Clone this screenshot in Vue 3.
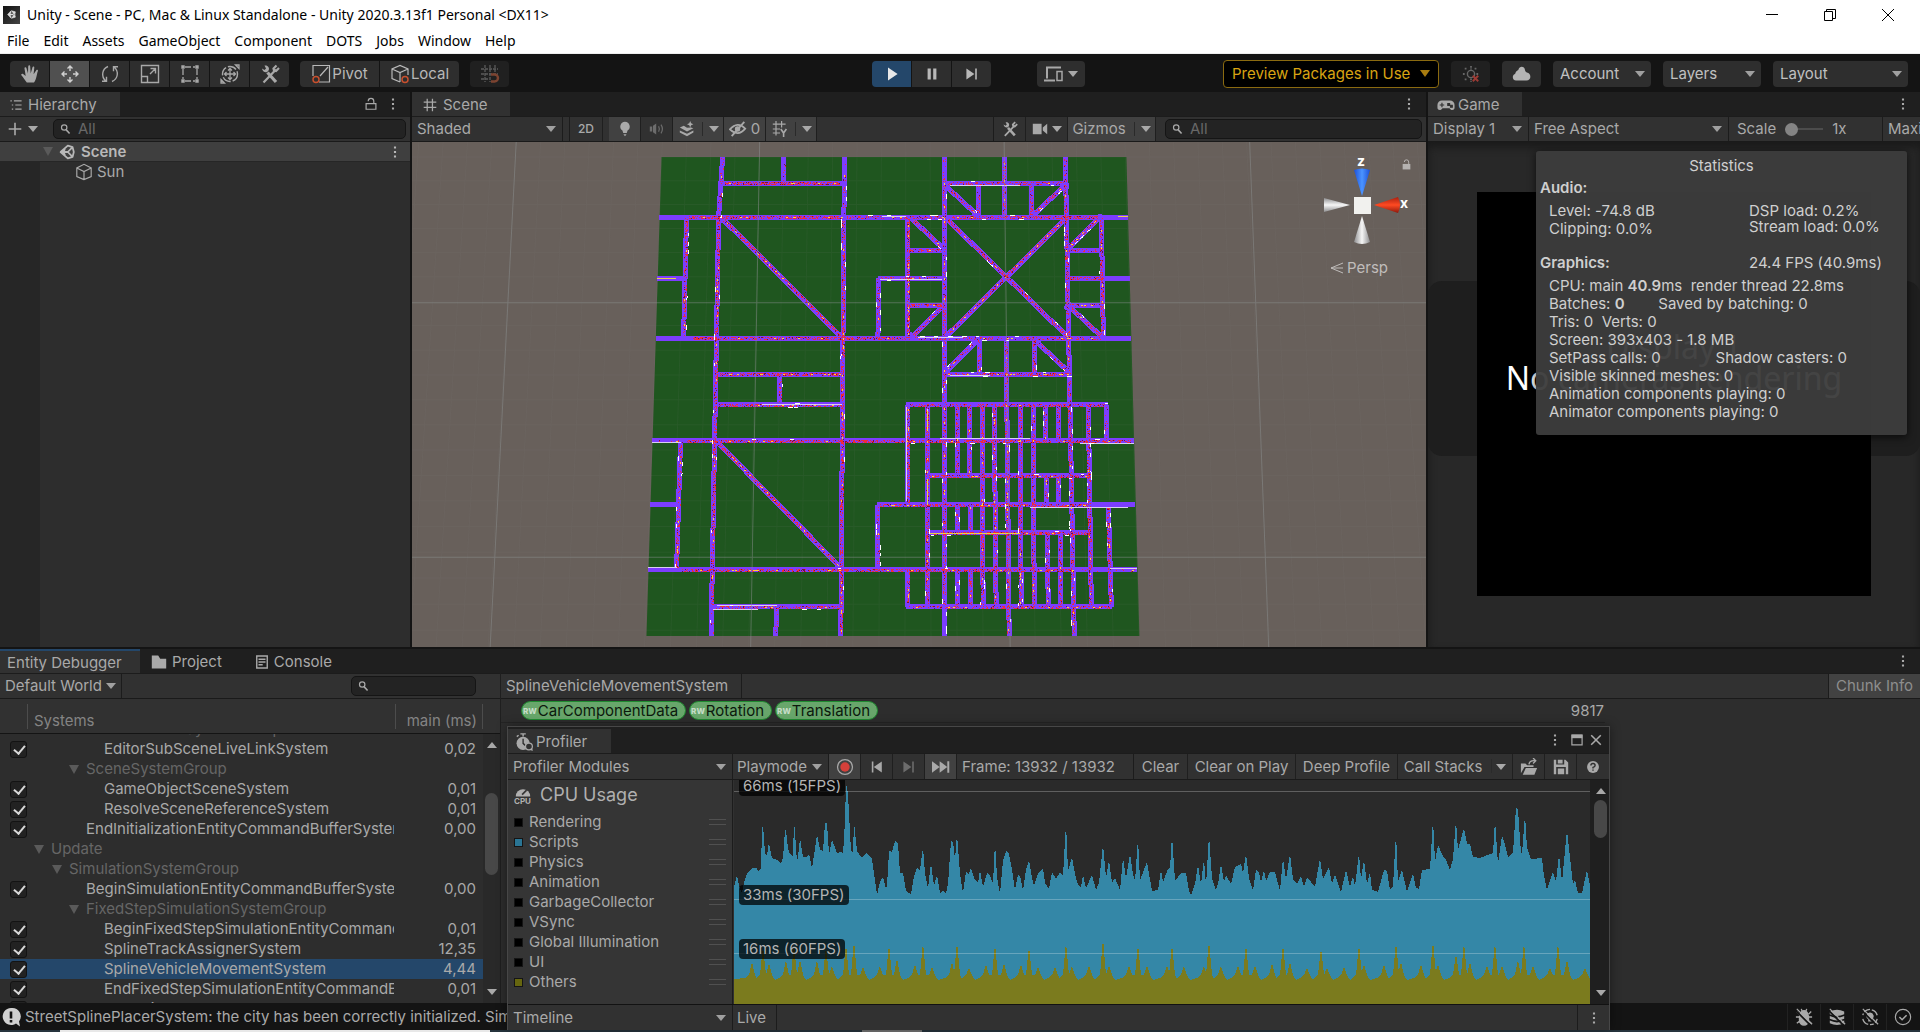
<script setup>
const icons = {
  logo: '<path d="M3 10 L9 3.5 L9 7 L7 9.2 H13 V10.8 H7 L9 13 V16.5 Z M9.5 3 L17 5.2 L15.5 12 M9.5 17 L17 14.8 L15.5 8" fill="currentColor" stroke="currentColor" stroke-width="1.2" fill-rule="evenodd"/>',
  unity: '<path d="M2 10 L11 2 L17 4 L18.500 10 L17 16 L11 18 Z M2 10 H11 L17 4 M11 10 L17 16 M7.500 6 L5.500 10 L7.500 14" fill="none" stroke="currentColor" stroke-width="2.200" stroke-linejoin="round"/>',
  hand: '<path d="M6.800 18.500 C4.500 16 3.500 13.600 1.400 11.300 C.7 10.300 2.100 9.300 3.100 10.100 L5.700 12.100 L4.500 4.500 C4.300 3.200 6 2.800 6.400 4 L8 9.600 L8.200 2.400 C8.300 1 10.100 1 10.200 2.400 L10.700 9.400 L12.500 3.200 C12.900 2 14.500 2.300 14.300 3.600 L13.600 10.200 L16.300 6.200 C17 5.200 18.400 6 17.900 7.100 C16.600 10.500 16.700 15.500 14 18.500 Z" fill="currentColor"/>',
  move: '<path d="M10 2v5M10 13v5M2 10h5M13 10h5M7.500 4.500L10 2l2.500 2.500M7.500 15.500L10 18l2.500-2.500M4.500 7.500L2 10l2.500 2.500M15.500 7.500L18 10l-2.500 2.500" fill="none" stroke="currentColor" stroke-width="1.400"/>',
  rotate: '<path d="M8 2.500C2 5 .8 12.500 5.800 17M2 17.200h4.500v-4.500M12 17.500C18 15 19.200 7.500 14.200 3M18 2.800h-4.500v4.500" fill="none" stroke="currentColor" stroke-width="1.400"/>',
  scale: '<path d="M1.500 1.500h17v17h-17zM1.500 12.500h6v6M10 10l5-5M10.500 4.500h5v5" fill="none" stroke="currentColor" stroke-width="1.400"/>',
  rect: '<path d="M5 3h10M5 17h10M3 5v10M17 5v10" fill="none" stroke="currentColor" stroke-width="1.300" stroke-dasharray="6 2"/><path d="M1.300 1.300h3.400v3.400H1.300zM15.300 1.300h3.400v3.400h-3.400zM1.300 15.300h3.400v3.400H1.300zM15.300 15.300h3.400v3.400H15.300z" fill="currentColor"/>',
  trans: '<circle cx="10" cy="10" r="7.500" fill="none" stroke="currentColor" stroke-width="1.400" stroke-dasharray="9 2"/><path d="M10 4.500v11M4.500 10h11M8 6.500l2-2 2 2M8 13.500l2 2 2-2M6.500 8l-2 2 2 2M13.500 8l2 2-2 2M1 15.500l3.500 3.500H1zM19 4.500L15.500 1H19z" fill="none" stroke="currentColor" stroke-width="1.300"/>',
  tools: '<path d="M3.500 18.500L16 5.500M16.500 1.500l-3 3 .5 2 2 .5 3-3" fill="none" stroke="currentColor" stroke-width="2.200"/><path d="M7.500 8.500l8.500 9.500" stroke="currentColor" stroke-width="3.200"/><path d="M2 4.500l2.500 1.500 1.500-1.500-1.500-3C8 1 10 4 8.500 6.500 7 9.500 2.500 8.500 2 4.500z" fill="currentColor"/>',
  pivot: '<path d="M8 18h10.500V1.500H2V12M9 12l8-9" fill="none" stroke="currentColor" stroke-width="1.200"/><circle cx="5" cy="15.500" r="3" fill="none" stroke="#c8502e" stroke-width="1.500"/>',
  local: '<path d="M10 18l-8-3.500V5L10 1.500 18 5v6M2 5l8 3.500L18 5M10 8.500V18" fill="none" stroke="currentColor" stroke-width="1.200"/><circle cx="15" cy="15.500" r="3" fill="none" stroke="#c8502e" stroke-width="1.500"/>',
  cube: '<path d="M10 18.500l-8-3.500V5.500L10 1.500l8 4V15zM2 5.500L10 9.500l8-4M10 9.500v9" fill="none" stroke="currentColor" stroke-width="1.300"/>',
  snap: '<path d="M1 5h17M1 10h17M1 15h8M5 1v17M10 1v17M15 1v8" fill="none" stroke="#5b5b5b" stroke-width="1.300" stroke-dasharray="3 1"/><path d="M11 10.500h3.500a3.500 3.500 0 010 7H11" fill="none" stroke="#7c4330" stroke-width="2.400"/>',
  play: '<path d="M5 2l12 8-12 8z" fill="#e8e8e8"/>',
  pause: '<path d="M4.500 3h4v14h-4zM11.500 3h4v14h-4z" fill="currentColor"/>',
  step: '<path d="M3 3l10 7-10 7zM14 3h2v14h-2z" fill="currentColor"/>',
  device: '<path d="M4 14.500V3.500h14M1 16.500h11" fill="none" stroke="currentColor" stroke-width="2"/><path d="M14 7.500h5v9h-5z" fill="none" stroke="currentColor" stroke-width="1.500"/>',
  bug: '<circle cx="10" cy="10" r="4" fill="none" stroke="#666" stroke-width="1.600"/><path d="M10 1v4M10 15v4M3 4h3M14 4h3M1 10h3M3 16h3M16 10h2" stroke="#666" stroke-width="2" stroke-dasharray="2 1"/><path d="M12 12l6 6M18 12l-6 6" stroke="#9c3a34" stroke-width="2.200"/>',
  cloud: '<path d="M4 16.500a3.500 3.500 0 01-.8-6.800C4 6.500 6 6.800 6.500 5.500 7.500 1.800 12.500 2 13 6c.1 1.200.8 2 1.800 2.600 5 1 4.600 7.900-.3 7.900z" fill="#b4b4b4"/>',
  hier: '<path d="M2 4h2M7 4h11M4 10h2M9 10h9M4 16h2M9 16h9" stroke="currentColor" stroke-width="1.700"/>',
  lock: '<path d="M3 9.500h14v8H3zM14 9.500V6a4 4 0 00-8 0" fill="none" stroke="currentColor" stroke-width="1.700"/>',
  lockFill: '<path d="M3 9h14v10H3z" fill="currentColor"/><path d="M14 9V5.500a4 4 0 00-8 0" fill="none" stroke="currentColor" stroke-width="1.800"/>',
  kebab: '<path d="M8.500 2h3v3h-3zM8.500 8.500h3v3h-3zM8.500 15h3v3h-3z" fill="currentColor"/>',
  plus: '<path d="M10 1v18M1 10h18" stroke="currentColor" stroke-width="2.300"/>',
  search: '<circle cx="7" cy="7.500" r="4.500" fill="none" stroke="currentColor" stroke-width="2"/><path d="M10 11l6 6.500" stroke="currentColor" stroke-width="2.600"/>',
  grid: '<path d="M6 1v18M13.500 1v18M1 6h18M1 13.500h18" stroke="currentColor" stroke-width="1.800"/>',
  bulb: '<path d="M10 1a6 6 0 00-3.200 11l1 3h4.400l1-3A6 6 0 0010 1zM8 16.500h4l-2 2.500z" fill="currentColor"/>',
  audio: '<path d="M1 7h3v6H1zM5 6l4-3v14l-4-3z" fill="currentColor"/><path d="M12 6.500q2 3.500 0 7M15 4.500q3.500 5.500 0 11" fill="none" stroke="currentColor" stroke-width="1.500"/>',
  layers: '<path d="M1 8l5-2 4 2.500L15 8l3 1-8 4zM1 12l9 4 8-4v2.500L10 19l-9-4.500zM14 0l1.200 2.800L18 4l-2.800 1.200L14 8l-1.200-2.800L10 4l2.800-1.200z" fill="currentColor"/>',
  eye: '<path d="M1 10.500Q9.500 1 18 9.500 10 19 1 10.500z" fill="none" stroke="currentColor" stroke-width="2"/><circle cx="9.500" cy="10" r="3" fill="currentColor"/><path d="M3 18L17 2" stroke="currentColor" stroke-width="2"/>',
  gridY: '<path d="M1 4h16M1 10h9M1 15h9M5 0v18M12 0v8" fill="none" stroke="currentColor" stroke-width="1.500"/><path d="M11 10l3.500 5L18 10M14.500 15v5" fill="none" stroke="currentColor" stroke-width="2"/>',
  camera: '<path d="M1 3.500h11v13H1zM13.500 8L19 3.500v13L13.500 12z" fill="currentColor"/>',
  pad: '<path d="M5.500 5h9a5 5 0 015 5v3c0 3.200-4.500 3.200-5.500.5H6C5 16.200.5 16.200.5 13v-3a5 5 0 015-5z" fill="currentColor"/><path d="M3 10h5M5.500 7.500v5M12 8.500h2v2h-2zM15 10.500h2v2h-2z" stroke="#313131" stroke-width="1.300" fill="#313131"/>',
  folder: '<path d="M1 2h8l2.500 4H19v12H1z" fill="currentColor"/>',
  console: '<path d="M2.500 1.500h15v17h-15zM5 6h10M5 10h10M5 14h6" fill="none" stroke="currentColor" stroke-width="2"/>',
  clock: '<circle cx="9" cy="11.500" r="7.300" fill="currentColor"/><path d="M6 1h6M9 1v3M2 4l2-1.500" stroke="currentColor" stroke-width="1.600"/><path d="M9 6.500v5l2.500 2.500" fill="none" stroke="#2d2d2d" stroke-width="1.500"/><circle cx="15.500" cy="15" r="3.800" fill="#313131" stroke="currentColor" stroke-width="1.400"/><path d="M17.500 17.500l2 2" stroke="currentColor" stroke-width="1.500"/>',
  cpu: '<path d="M2 11.500a8 8 0 1116 0z" fill="currentColor"/><path d="M9 9.500l5-5" stroke="#353535" stroke-width="1.800"/>',
  prev: '<path d="M16 3v14L6 10zM3.500 3h2v14h-2z" fill="currentColor"/>',
  last: '<path d="M0 3.500L8.500 10 0 16.500zM8.500 3.500L17 10l-8.500 6.500zM17 3.500h2.200v13H17z" fill="currentColor"/>',
  rec: '<circle cx="10" cy="10" r="8.300" fill="none" stroke="#a8a8a8" stroke-width="1.400"/><circle cx="10" cy="10" r="5.200" fill="#d4403a"/>',
  open: '<path d="M1 17V6h5l2 2h7v2H5zM3 18.500L6.500 11H19l-3 7.500z" fill="currentColor"/><path d="M10 7c.5-4 3-4.500 7-4M14.500 0l3 3-3 3" fill="none" stroke="currentColor" stroke-width="1.500"/>',
  save: '<path d="M1 1h3v6h10V1h1.500L19 4.500V19h-3v-9H4v9H1zM6 1h6v4.500H6zM6 12h8v7H6z" fill="currentColor" fill-rule="evenodd"/>',
  help: '<circle cx="10" cy="10" r="8.500" fill="currentColor"/><path d="M7 8q0-3 3-3t3 2.700q0 1.500-3 3v1.500" fill="none" stroke="#313131" stroke-width="2"/><path d="M9 13.500h2v2H9z" fill="#313131"/>',
  max: '<path d="M1.500 2h17v16h-17z" fill="none" stroke="currentColor" stroke-width="2"/><path d="M1 1h18v6H1z" fill="currentColor"/>',
  close: '<path d="M2 2l16 16M18 2L2 18" stroke="currentColor" stroke-width="2.600"/>',
  info: '<path d="M10 1a8.500 8.500 0 105 15.500l4 3-1-5A8.500 8.500 0 0010 1z" fill="#d0d0d0"/><path d="M10 4.500v7M10 13v2.500" stroke="#141414" stroke-width="2.600"/>',
  sBug: '<path d="M6 7a4 4 0 018 0l1 2v5a5 5 0 01-10 0V9zM1 10h4M15 10h4M2 4l3 3M18 4l-3 3M2 17l4-3M18 17l-4-3M7 1l1 3M13 1l-1 3" fill="currentColor" stroke="currentColor" stroke-width="1.500"/><path d="M0 2l17 17" stroke="#141414" stroke-width="2"/><path d="M2 1l17 17" stroke="currentColor" stroke-width="1.400"/>',
  sDb: '<path d="M2 4q8-4 16 0v3q-8 4-16 0zM2 9q8 4 16 0v3q-8 4-16 0zM2 14q8 4 16 0v3q-8 4-16 0z" fill="currentColor"/><path d="M0 2l17 17" stroke="#141414" stroke-width="2"/><path d="M2 1l17 17" stroke="currentColor" stroke-width="1.400"/>',
  sSun: '<path d="M2 8A8.500 8.500 0 0110 1.500M18 12a8.500 8.500 0 01-8 6.500M12 2a8.500 8.500 0 016 6M2 12a8.500 8.500 0 006 6.300" fill="none" stroke="currentColor" stroke-width="1.500"/><path d="M10 5a4 4 0 00-2 7.500V15h4v-2.500A4 4 0 0010 5z" fill="currentColor"/><path d="M0 2l17 17" stroke="#141414" stroke-width="2"/><path d="M2 1l17 17" stroke="currentColor" stroke-width="1.400"/>',
  sOk: '<circle cx="10" cy="10" r="8.500" fill="none" stroke="currentColor" stroke-width="1.300"/><path d="M6 10l3 3 5-5" fill="none" stroke="currentColor" stroke-width="1.700"/>',
}

const menus = ['File', 'Edit', 'Assets', 'GameObject', 'Component', 'DOTS', 'Jobs', 'Window', 'Help']
const tools = ['hand', 'move', 'rotate', 'scale', 'rect', 'trans', 'tools']

const systems = [
  { name: 'LiveLinkEditorSystemGroup', x: 86, group: true },
  { name: 'EditorSubSceneLiveLinkSystem', x: 104, ms: '0,02' },
  { name: 'SceneSystemGroup', x: 86, group: true },
  { name: 'GameObjectSceneSystem', x: 104, ms: '0,01' },
  { name: 'ResolveSceneReferenceSystem', x: 104, ms: '0,01' },
  { name: 'EndInitializationEntityCommandBufferSystem', x: 86, ms: '0,00' },
  { name: 'Update', x: 51, group: true },
  { name: 'SimulationSystemGroup', x: 69, group: true },
  { name: 'BeginSimulationEntityCommandBufferSystem', x: 86, ms: '0,00' },
  { name: 'FixedStepSimulationSystemGroup', x: 86, group: true },
  { name: 'BeginFixedStepSimulationEntityCommandBufferSystem', x: 104, ms: '0,01' },
  { name: 'SplineTrackAssignerSystem', x: 104, ms: '12,35' },
  { name: 'SplineVehicleMovementSystem', x: 104, ms: '4,44', selected: true },
  { name: 'EndFixedStepSimulationEntityCommandBufferSystem', x: 104, ms: '0,01' },
  { name: 'StreetSplinePlacerSystem', x: 86, ms: '0,00' },
]

const legend = [
  ['Rendering', '#000'], ['Scripts', '#2a7594'], ['Physics', '#000'], ['Animation', '#000'],
  ['GarbageCollector', '#000'], ['VSync', '#000'], ['Global Illumination', '#000'], ['UI', '#000'], ['Others', '#66660f'],
]

// x1, y1, x2, y2, traffic density, share of white lane marks
const roads = [
  [723, 157, 719, 217, .3, .3], [719, 217, 712, 606, .6, .1], [712, 606, 712, 635, .1, .3], [784, 157, 784, 183, .1, .3],
  [845, 157, 844, 217, .1, .3], [844, 217, 841, 635, .6, .12],
  [944, 157, 944, 404, .35, .15], [944, 404, 944, 606, .4, .2], [944, 606, 944, 635, 0, .5],
  [1004, 157, 1004, 217, .4, .1], [1006, 338, 1009, 635, .4, .15], [1065, 157, 1074, 635, .4, .2],
  [723, 183, 844, 183, .8, 0], [944, 183, 1066, 183, .5, .1], [687, 217, 845, 217, .7, 0], [660, 217, 687, 217, 0, 0], [845, 217, 950, 217, .4, .3], [950, 217, 1100, 217, .6, .05], [1100, 217, 1128, 217, 0, 0],
  [687, 217, 684, 338, .5, .25], [658, 278, 686, 278, 0, 0], [878, 278, 944, 278, .4, .3], [1068, 278, 1103, 278, .7, 0], [1103, 278, 1130, 278, 0, 0],
  [879, 278, 878, 338, .3, .3], [723, 219, 842, 337, .7, .05], [657, 338, 690, 338, 0, 0], [690, 338, 912, 338, .7, 0], [912, 338, 1020, 338, .3, .4], [1020, 338, 1103, 338, .5, 0], [1103, 338, 1131, 338, 0, 0],
  [908, 217, 908, 338, .6, 0], [908, 250, 944, 250, .6, 0], [908, 305, 944, 305, .6, 0],
  [911, 218, 943, 248, .5, .1], [942, 307, 912, 337, .5, .2], [947, 219, 1068, 337, .6, .1], [1065, 219, 945, 337, .6, .05],
  [947, 187, 976, 214, .5, .1], [1063, 187, 1034, 214, .5, .2], [978, 183, 978, 217, .4, .1], [1031, 183, 1031, 217, .5, 0],
  [1101, 217, 1103, 338, .5, .15], [1067, 250, 1103, 250, .5, 0], [1068, 305, 1103, 305, .5, 0], [1098, 219, 1068, 248, .5, .3], [1070, 307, 1102, 337, .5, .1],
  [944, 374, 1070, 374, .6, .2], [975, 342, 947, 370, .4, .3], [1037, 342, 1068, 371, .5, .2], [979, 338, 979, 374, .4, .1], [1034, 338, 1034, 374, .5, .1],
  [718, 374, 844, 374, .7, 0], [780, 374, 780, 404, .3, .2], [717, 404, 843, 404, .6, .2],
  [653, 440, 685, 440, .1, 0], [685, 440, 1134, 440, .6, .05], [681, 440, 677, 569, .4, .2], [651, 504, 679, 504, 0, 0],
  [718, 442, 840, 566, .7, .06], [649, 569, 680, 569, 0, 0], [680, 569, 1075, 569, .6, .03], [1075, 569, 1137, 569, .1, 0],
  [713, 606, 842, 606, .4, .1], [777, 606, 776, 635, .1, .2],
  [906, 404, 1108, 404, .5, .03], [927, 475, 1092, 475, .6, .1], [877, 504, 1090, 504, .6, 0], [1090, 504, 1135, 504, 0, 0], [927, 532, 1092, 532, .6, .2], [906, 606, 1112, 606, .5, 0],
  [878, 504, 878, 569, .2, .3], [908, 404, 908, 504, .4, 0], [908, 569, 908, 606, .3, 0], [927, 404, 927, 606, .5, .1],
  [957, 404, 957, 475, .4, .2], [957, 504, 957, 532, .2, .3], [957, 569, 957, 606, .3, .2], [969, 404, 969, 475, .4, .1], [970, 504, 970, 532, .2, .2], [970, 569, 970, 606, .4, .1],
  [982, 404, 983, 606, .5, .1], [994, 404, 996, 606, .5, .1], [1020, 404, 1021, 606, .5, .1], [1033, 404, 1034, 606, .5, .1],
  [1045, 404, 1045, 440, .3, .3], [1046, 475, 1046, 504, .3, .2], [1047, 532, 1048, 606, .3, .3], [1058, 404, 1058, 440, .4, .2], [1058, 475, 1058, 504, .3, .2], [1060, 532, 1060, 606, .4, .2],
  [1088, 404, 1091, 606, .5, .1], [1106, 404, 1106, 440, .3, .2], [1108, 504, 1111, 606, .5, .2],
]
const junctions = [[723, 219], [841, 336], [911, 336], [942, 247], [947, 219], [1065, 219], [1068, 247], [1100, 218], [946, 336], [1101, 337], [1065, 186], [946, 186], [976, 214], [1034, 214], [975, 341], [1037, 341], [946, 371], [1068, 371], [719, 442], [839, 566], [1068, 307], [942, 307]]

let seed = 7
const rnd = () => ((seed = (seed * 16807) % 2147483647) / 2147483647)
const traffic = { red: '', dark: '', white: '', yellow: '' }
for (const [x1, y1, x2, y2, density, white] of roads) {
  const len = Math.hypot(x2 - x1, y2 - y1)
  const ux = (x2 - x1) / len
  const uy = (y2 - y1) / len
  // vehicles are one-pixel cells, so a longer one is a run of cells
  const put = (key, at, off, l) => {
    for (let k = 0; k < l; k++) {
      const x = Math.floor(x1 + ux * (at + k) - uy * off)
      const y = Math.floor(y1 + uy * (at + k) + ux * off)
      traffic[key] += `M${x} ${y}h1v1h-1z`
    }
  }
  for (let t = 2; t < len - 2; t += 1) {
    for (const off of [-1, 0, 1]) {
      if (rnd() < density * (off ? 0.75 : 0.55)) put(rnd() < 0.16 ? 'dark' : 'red', t, off, 1)
    }
    if (rnd() < density * 0.07) put('yellow', t, 0, 2)
    if (rnd() < white * 0.2) put('white', t, rnd() < 0.5 ? -2 : 2, 3 + Math.floor(rnd() * 3))
  }
}
const roadPath = roads.map(([a, b, c, d]) => `M${a} ${b}L${c} ${d}`).join('')
const laneLights = 'M653 441.500h28M649 566.500h28M1110 567.500h27M950 185.500h70M882 216.500h24M880 279.500h62M918 337.500h45M762 403.500h80M717 604.500h60M713 608.500h45M906.500 406v94M927.500 408v14M1080 442.500h54M1030 506.500h98M940 437.500h90M950 375.500h40'
const goldLights = 'M1118 216.500h10M658 278.500h18M927.500 410v20M927.500 478v26M930 532.500h90'

let minor = ''
for (let i = -24; i < 26; i++) minor += `M${1003 + i * 24.3} 142L${1009 + i * 26} 646`
for (let i = 0, y = 157; y < 646; i++) { minor += `M412 ${y}H1425`; y += 23.6 + i * 0.14 }

const blue = '734,886 737,874 739,885 742,892 744,882 747,873 752,867 757,867 758,870 761,867 762,828 763,824 765,852 767,855 769,841 770,848 772,857 777,859 781,863 783,857 785,829 786,829 788,847 790,853 793,855 794,819 796,845 797,862 799,847 800,837 803,856 807,856 809,853 812,867 815,848 817,833 820,849 823,850 825,822 827,822 829,853 832,839 834,844 837,852 841,851 843,853 845,820 846,782 848,793 851,850 853,851 854,821 857,850 862,857 866,852 872,858 874,872 877,894 880,881 883,876 886,888 887,885 889,850 892,851 895,840 898,842 900,872 903,872 906,890 911,893 914,875 917,867 920,869 923,846 925,872 928,887 931,862 934,885 937,874 940,892 943,889 946,893 948,883 951,840 953,841 955,858 957,833 960,873 963,892 966,871 969,873 971,867 974,877 978,882 980,869 983,886 987,872 989,873 993,882 995,841 997,876 1000,893 1003,860 1006,850 1009,853 1012,869 1015,889 1018,874 1020,875 1023,889 1026,869 1029,859 1032,877 1034,885 1038,872 1043,867 1045,882 1049,888 1052,871 1056,878 1060,871 1063,875 1066,822 1068,870 1072,856 1075,873 1078,884 1081,886 1083,874 1086,887 1092,874 1096,889 1099,882 1103,843 1106,877 1109,859 1112,882 1115,877 1120,889 1123,857 1126,877 1130,853 1133,873 1135,880 1138,837 1140,879 1147,861 1152,890 1158,889 1161,869 1163,881 1168,868 1170,867 1172,834 1175,880 1181,872 1186,872 1189,890 1191,894 1195,883 1198,864 1201,883 1204,858 1206,885 1209,834 1212,877 1216,889 1218,883 1221,863 1224,881 1226,874 1231,883 1235,866 1241,863 1243,872 1246,853 1249,877 1253,890 1256,869 1259,871 1261,881 1264,869 1266,880 1270,871 1275,871 1280,890 1283,857 1286,878 1290,853 1293,878 1297,883 1301,875 1304,886 1307,876 1315,886 1320,857 1323,878 1329,866 1332,883 1335,874 1341,891 1346,869 1350,886 1353,875 1355,885 1359,852 1361,878 1364,859 1367,883 1370,871 1372,889 1378,891 1384,869 1387,870 1390,889 1393,885 1396,832 1398,881 1402,869 1407,891 1413,873 1416,887 1419,888 1422,869 1430,868 1433,818 1435,861 1438,844 1443,855 1446,859 1450,869 1453,858 1456,819 1458,849 1464,827 1467,843 1470,843 1473,856 1480,857 1493,852 1495,819 1498,863 1502,835 1504,840 1508,856 1513,852 1516,807 1518,809 1521,852 1522,852 1525,814 1527,847 1531,858 1542,857 1544,875 1547,889 1553,871 1556,881 1559,853 1562,881 1567,829 1573,883 1575,879 1578,892 1582,892 1587,869 1590,884'
const peaks = [[752, 961], [763, 945], [769, 962], [786, 959], [794, 943], [800, 958], [817, 959], [826, 945], [832, 965], [846, 943], [854, 939], [863, 966], [880, 965], [889, 943], [897, 957], [915, 963], [923, 941], [932, 966], [952, 961], [957, 940], [969, 967], [986, 963], [995, 943], [1004, 962], [1021, 963], [1029, 945], [1038, 966], [1055, 966], [1066, 941], [1072, 965], [1089, 964], [1103, 937], [1109, 964], [1129, 964], [1138, 943], [1147, 964], [1167, 964], [1172, 943], [1184, 965], [1204, 965], [1209, 939], [1221, 965], [1238, 964], [1246, 943], [1255, 964], [1272, 962], [1283, 943], [1290, 961], [1307, 967], [1321, 946], [1327, 967], [1344, 966], [1359, 943], [1364, 963], [1384, 963], [1396, 940], [1401, 961], [1421, 963], [1433, 939], [1438, 963], [1456, 952], [1464, 941], [1470, 961], [1487, 964], [1495, 941], [1502, 964], [1518, 959], [1524, 941], [1533, 964], [1550, 967], [1558, 941], [1567, 958], [1585, 967]]
const olive = ['734,978']
peaks.forEach(([x, y], i) => {
  const prev = i ? peaks[i - 1][0] : 734
  if (x - prev > 9) olive.push(`${x - 7},977`)
  olive.push(`${x - 3},974`, `${x},${y}`, `${x + 3},974`)
  if (!peaks[i + 1] || peaks[i + 1][0] - x > 9) olive.push(`${x + 6},979`)
})
</script>

<template>
  <div class="app">
    <header class="titlebar">
      <div class="title">
        <span class="logo"><svg viewBox="0 0 20 20" v-html="icons.logo"></svg></span>
        <span>Unity - Scene - PC, Mac &amp; Linux Standalone - Unity 2020.3.13f1 Personal &lt;DX11&gt;</span>
      </div>
      <div class="winbtns">
        <button aria-label="Minimize"><svg viewBox="0 0 14 14"><path d="M1 6.500h12" stroke="#000" /></svg></button>
        <button aria-label="Restore"><svg viewBox="0 0 14 14"><path d="M1.500 3.500h8v9h-8zM3.500 3.500v-2h9v9h-3" fill="none" stroke="#000" /></svg></button>
        <button aria-label="Close"><svg viewBox="0 0 14 14"><path d="M1 1l12 12M13 1L1 13" stroke="#000" /></svg></button>
      </div>
    </header>
    <nav class="menubar"><button v-for="m in menus" :key="m">{{ m }}</button></nav>

    <div class="maintools">
      <div class="group">
        <button v-for="t in tools" :key="t" class="tb" :class="{ on: t === 'move' }" :aria-label="t"><svg class="i20" viewBox="0 0 20 20" v-html="icons[t]"></svg></button>
      </div>
      <div class="group">
        <button class="tb wide"><svg class="i20" viewBox="0 0 20 20" v-html="icons.pivot"></svg>Pivot</button>
        <button class="tb wide"><svg class="i20" viewBox="0 0 20 20" v-html="icons.local"></svg>Local</button>
      </div>
      <div class="group"><button class="tb dim" aria-label="Snap"><svg class="i20" viewBox="0 0 20 20" v-html="icons.snap"></svg></button></div>
      <div class="group playgroup">
        <button class="tb playing" aria-label="Play"><svg class="i16" viewBox="0 0 20 20" v-html="icons.play"></svg></button>
        <button class="tb" aria-label="Pause"><svg class="i16" viewBox="0 0 20 20" v-html="icons.pause"></svg></button>
        <button class="tb" aria-label="Step"><svg class="i16" viewBox="0 0 20 20" v-html="icons.step"></svg></button>
      </div>
      <button class="tb device" aria-label="Device"><svg class="i20" viewBox="0 0 20 20" v-html="icons.device"></svg><i class="tri"></i></button>
      <div class="right">
        <button class="preview">Preview Packages in Use<i class="tri"></i></button>
        <button class="tb dim" aria-label="Debug"><svg class="i18" viewBox="0 0 20 20" v-html="icons.bug"></svg></button>
        <button class="tb" aria-label="Cloud"><svg class="i20" viewBox="0 0 20 20" v-html="icons.cloud"></svg></button>
        <span class="dd top"><select aria-label="Account"><option>Account</option></select></span>
        <span class="dd top"><select aria-label="Layers"><option>Layers</option></select></span>
        <span class="dd top layout"><select aria-label="Layout"><option>Layout</option></select></span>
      </div>
    </div>

    <main class="upper">
      <section class="panel hierarchy">
        <div class="tabs">
          <div class="tab"><svg class="i14" viewBox="0 0 20 20" v-html="icons.hier"></svg>Hierarchy</div>
          <span class="grow"></span>
          <svg class="i14" viewBox="0 0 20 20" v-html="icons.lock"></svg>
          <svg class="i14 keb" viewBox="0 0 20 20" v-html="icons.kebab"></svg>
        </div>
        <div class="bar hbar">
          <button class="add" aria-label="Add"><svg class="i14" viewBox="0 0 20 20" v-html="icons.plus"></svg><i class="tri"></i></button>
          <label class="find"><svg class="i12" viewBox="0 0 20 20" v-html="icons.search"></svg><input aria-label="Search hierarchy" placeholder="All" /></label>
        </div>
        <div class="tree">
          <div class="node scene"><i class="tri dark"></i><svg class="i16" viewBox="0 0 20 20" v-html="icons.unity"></svg><b>Scene</b><span class="grow"></span><svg class="i14" viewBox="0 0 20 20" v-html="icons.kebab"></svg></div>
          <div class="node sun"><svg class="i18" viewBox="0 0 20 20" v-html="icons.cube"></svg>Sun</div>
        </div>
      </section>

      <section class="panel sceneview">
        <div class="tabs">
          <div class="tab"><svg class="i14" viewBox="0 0 20 20" v-html="icons.grid"></svg>Scene</div>
          <span class="grow"></span>
          <svg class="i14 keb" viewBox="0 0 20 20" v-html="icons.kebab"></svg>
        </div>
        <div class="bar sbar">
          <span class="dd shaded"><select aria-label="Draw mode"><option>Shaded</option></select></span>
          <button class="seg two">2D</button>
          <button class="seg lit" aria-label="Lighting"><svg class="i16" viewBox="0 0 20 20" v-html="icons.bulb"></svg></button>
          <button class="seg off" aria-label="Audio"><svg class="i16" viewBox="0 0 20 20" v-html="icons.audio"></svg></button>
          <button class="seg lit w51 split" aria-label="Effects"><svg class="i16" viewBox="0 0 20 20" v-html="icons.layers"></svg><i class="tri"></i></button>
          <button class="seg lit w42"><svg class="i18" viewBox="0 0 20 20" v-html="icons.eye"></svg>0</button>
          <button class="seg lit w51 split" aria-label="Grid"><svg class="i16" viewBox="0 0 20 20" v-html="icons.gridY"></svg><i class="tri"></i></button>
          <span class="grow"></span>
          <button class="seg w32" aria-label="Tools"><svg class="i16" viewBox="0 0 20 20" v-html="icons.tools"></svg></button>
          <button class="seg w42" aria-label="Camera"><svg class="i16" viewBox="0 0 20 20" v-html="icons.camera"></svg><i class="tri"></i></button>
          <button class="seg lit giz split">Gizmos<i class="tri"></i></button>
          <label class="find"><svg class="i12" viewBox="0 0 20 20" v-html="icons.search"></svg><input aria-label="Search scene" placeholder="All" /></label>
        </div>
        <div class="viewport">
          <svg class="world" viewBox="412 142 1014 504" preserveAspectRatio="xMidYMid slice">
            <path d="M662 157H1126L1139 635H647Z" fill="#1f561f" />
            <path :d="minor" stroke="#8a8a8a" stroke-opacity=".09" fill="none" />
            <g shape-rendering="crispEdges">
              <path :d="roadPath" stroke="#7c3dff" stroke-width="5" fill="none" />
              <circle v-for="(j, i) in junctions" :key="i" :cx="j[0]" :cy="j[1]" r="4" fill="#7c3dff" />
              <path :d="traffic.red" fill="#f02a3c" />
              <path :d="traffic.dark" fill="#7a1238" />
              <path :d="laneLights" stroke="#d8cdf2" fill="none" />
              <path :d="goldLights" stroke="#e6d24a" fill="none" />
              <path :d="traffic.white" fill="#fff" />
              <path :d="traffic.yellow" fill="#ffd23c" />
            </g>
            <path d="M517 142L491 646M760 142L751 646M1004 142L1010 646M1249 142L1268 646M412 302.500H1425M412 556.500H1425" stroke="#8c9090" stroke-opacity=".5" fill="none" />
          </svg>
          <div class="gizmo">
            <svg viewBox="0 0 90 100" width="90" height="100">
              <defs>
                <linearGradient id="gb"><stop offset="0" stop-color="#1c50d8" /><stop offset=".5" stop-color="#4b94ff" /><stop offset="1" stop-color="#1c50d8" /></linearGradient>
                <linearGradient id="gw"><stop offset="0" stop-color="#8e8e90" /><stop offset=".5" stop-color="#f6f6f6" /><stop offset="1" stop-color="#8e8e90" /></linearGradient>
                <linearGradient id="gr" x2="0" y2="1"><stop offset="0" stop-color="#a82010" /><stop offset=".5" stop-color="#ff4a22" /><stop offset="1" stop-color="#8a180c" /></linearGradient>
                <linearGradient id="gl" x2="0" y2="1"><stop offset="0" stop-color="#8e8e90" /><stop offset=".5" stop-color="#f6f6f6" /><stop offset="1" stop-color="#8e8e90" /></linearGradient>
              </defs>
              <text x="33" y="16" class="axis">z</text><text x="76" y="58" class="axis">x</text>
              <path d="M30 20Q38 17 46 20L38 46Z" fill="url(#gb)" />
              <path d="M30 92L38 66L46 92Q38 96 30 92Z" fill="url(#gw)" />
              <path d="M0 48Q-1 54 0 62L26 55Z" fill="url(#gl)" />
              <path d="M50 55L74 47Q78 55 74 63Z" fill="url(#gr)" />
              <path d="M30 47h17v17H30z" fill="#f1f1ee" />
            </svg>
            <div class="persp"><svg width="14" height="12" viewBox="0 0 14 12"><path d="M13 1L1 6l12 5M1 6h12" fill="none" stroke="#c0bdbb" /></svg>Persp</div>
          </div>
          <svg class="vlock" viewBox="0 0 20 20" v-html="icons.lockFill"></svg>
        </div>
      </section>

      <section class="panel game">
        <div class="tabs">
          <div class="tab"><svg class="i18" viewBox="0 0 20 20" v-html="icons.pad"></svg>Game</div>
          <span class="grow"></span>
          <svg class="i14 keb" viewBox="0 0 20 20" v-html="icons.kebab"></svg>
        </div>
        <div class="bar gbar">
          <span class="dd disp"><select aria-label="Display"><option>Display 1</option></select></span>
          <span class="dd aspect"><select aria-label="Aspect"><option>Free Aspect</option></select></span>
          <label class="scale">Scale<input type="range" min="1" max="5" value="1" /><span>1x</span></label>
          <button class="maxi">Maximize On Play</button>
        </div>
        <div class="gview">
          <div class="bubble"></div>
          <div class="black"></div>
          <div class="nocam">Display 1<br />No cameras rendering</div>
          <div class="stats">
            <h2>Statistics</h2>
            <h3>Audio:</h3>
            <div class="pair audio"><div>Level: -74.8 dB<br />Clipping: 0.0%</div><div class="c2">DSP load: 0.2%<br />Stream load: 0.0%</div></div>
            <div class="pair gfx"><h3>Graphics:</h3><div>24.4 FPS (40.9ms)</div></div>
            <pre>CPU: main <b>40.9</b>ms  render thread 22.8ms
Batches: <b>0</b>        Saved by batching: 0
Tris: 0  Verts: 0
Screen: 393x403 - 1.8 MB
SetPass calls: 0             Shadow casters: 0
Visible skinned meshes: 0
Animation components playing: 0
Animator components playing: 0</pre>
          </div>
        </div>
      </section>
    </main>

    <div class="dock">
      <section class="debugger">
        <div class="tabs">
          <div class="tab active">Entity Debugger</div>
          <div class="tab plain"><svg class="i16" viewBox="0 0 20 20" v-html="icons.folder"></svg>Project</div>
          <div class="tab plain con"><svg class="i14" viewBox="0 0 20 20" v-html="icons.console"></svg>Console</div>
          <span class="grow"></span>
          <svg class="i14 keb" viewBox="0 0 20 20" v-html="icons.kebab"></svg>
        </div>
        <div class="dbody">
          <div class="systems">
            <div class="bar dbar">
              <span class="dd worldsel"><select aria-label="World"><option>Default World</option></select></span>
              <label class="find small"><svg class="i12" viewBox="0 0 20 20" v-html="icons.search"></svg><input aria-label="Search systems" /></label>
            </div>
            <div class="thead"><span class="h1"></span><span class="h2">Systems</span><span class="h3">main (ms)</span></div>
            <div class="scroller">
              <div class="clip">
                <table>
                  <tbody>
                    <tr v-for="s in systems" :key="s.name" :class="{ sel: s.selected, grp: s.group }">
                      <td class="ck"><input v-if="!s.group" type="checkbox" checked :aria-label="s.name" /></td>
                      <td class="nm" :style="{ paddingLeft: s.x - 27 - (s.group ? 17 : 0) + 'px' }"><i v-if="s.group" class="tri dark"></i>{{ s.name }}</td>
                      <td class="ms">{{ s.ms }}</td>
                    </tr>
                  </tbody>
                </table>
              </div>
              <div class="sbarv"><i class="tri up"></i><span class="thumb"></span><i class="tri"></i></div>
            </div>
          </div>
          <div class="entities">
            <div class="bar ebar"><button class="sysname">SplineVehicleMovementSystem</button><span class="grow"></span><button class="chunk">Chunk Info</button></div>
            <div class="comps">
              <span v-for="c in ['CarComponentData', 'Rotation', 'Translation']" :key="c" class="pill"><small>RW</small>{{ c }}</span>
              <span class="count">9817</span>
            </div>
          </div>
        </div>
      </section>
      <footer class="status">
        <svg class="i20" viewBox="0 0 20 20" v-html="icons.info"></svg>
        <span class="msg">StreetSplinePlacerSystem: the city has been correctly initialized. Simulation started</span>
        <button v-for="k in ['sBug', 'sDb', 'sSun', 'sOk']" :key="k" :aria-label="k"><svg class="i18" viewBox="0 0 20 20" v-html="icons[k]"></svg></button>
      </footer>

      <section class="profiler">
        <div class="tabs ptabs">
          <div class="tab"><svg class="i18" viewBox="0 0 20 20" v-html="icons.clock"></svg>Profiler</div>
          <span class="grow"></span>
          <button aria-label="Options"><svg class="i14" viewBox="0 0 20 20" v-html="icons.kebab"></svg></button>
          <button aria-label="Maximize"><svg class="i12" viewBox="0 0 20 20" v-html="icons.max"></svg></button>
          <button aria-label="Close"><svg class="i12" viewBox="0 0 20 20" v-html="icons.close"></svg></button>
        </div>
        <div class="bar pbar">
          <span class="dd mods"><select aria-label="Modules"><option>Profiler Modules</option></select></span>
          <span class="dd pm"><select aria-label="Target"><option>Playmode</option></select></span>
          <button class="seg lit w32" aria-label="Record"><svg class="i18" viewBox="0 0 20 20" v-html="icons.rec"></svg></button>
          <button class="seg w32" aria-label="Previous frame"><svg class="i16" viewBox="0 0 20 20" v-html="icons.prev"></svg></button>
          <button class="seg off w32" aria-label="Next frame"><svg class="i16" viewBox="0 0 20 20" v-html="icons.step"></svg></button>
          <button class="seg lit w32" aria-label="Last frame"><svg class="i18" viewBox="0 0 20 20" v-html="icons.last"></svg></button>
          <span class="frame">Frame: 13932 / 13932</span>
          <button class="seg b1">Clear</button>
          <button class="seg b2">Clear on Play</button>
          <button class="seg b3">Deep Profile</button>
          <button class="seg b4 split">Call Stacks<i class="tri"></i></button>
          <button class="seg w32" aria-label="Load"><svg class="i18" viewBox="0 0 20 20" v-html="icons.open"></svg></button>
          <button class="seg w32" aria-label="Save"><svg class="i16" viewBox="0 0 20 20" v-html="icons.save"></svg></button>
          <button class="seg w32 lastb" aria-label="Help"><svg class="i14" viewBox="0 0 20 20" v-html="icons.help"></svg></button>
        </div>
        <div class="pbody">
          <div class="module">
            <div class="mhead"><span class="cpu"><svg viewBox="0 0 20 12" v-html="icons.cpu"></svg>CPU</span>CPU Usage</div>
            <div v-for="l in legend" :key="l[0]" class="lg"><i class="sw" :style="{ background: l[1] }"></i>{{ l[0] }}<span class="handle"></span></div>
          </div>
          <div class="chart">
            <svg viewBox="734 779 856 224" preserveAspectRatio="none" shape-rendering="crispEdges">
              <polygon :points="'734,1003 ' + blue + ' 1590,1003'" fill="#3487a7" />
              <polygon :points="'734,1003 ' + olive.join(' ') + ' 1590,1003'" fill="#7b7b1e" />
              <path d="M734 790.500H1590M734 898.500H1590M734 952.500H1590" stroke="#fff" stroke-opacity=".25" />
            </svg>
            <span class="tag t66">66ms (15FPS)</span><span class="tag t33">33ms (30FPS)</span><span class="tag t16">16ms (60FPS)</span>
          </div>
          <div class="sbarv pv"><i class="tri up"></i><span class="thumb"></span><i class="tri"></i></div>
        </div>
        <div class="pfoot">
          <span class="dd mods"><select aria-label="View"><option>Timeline</option></select></span>
          <button class="live">Live</button><span class="grow"></span>
          <button class="fk" aria-label="Options"><svg class="i14" viewBox="0 0 20 20" v-html="icons.kebab"></svg></button>
        </div>
      </section>
    </div>
    <div class="desktop"></div>
  </div>
</template>

<style>
html, body { margin: 0; background: #141414; }
</style>

<style scoped>
.app { display: flex; flex-direction: column; height: 100vh; min-height: 800px; overflow: hidden; background: #141414; color: #a9a9a9; font: 15px/20px Inter, "Liberation Sans", sans-serif; font-feature-settings: "calt" 0; }
.app * { box-sizing: border-box; }
button, select, input { font: inherit; font-feature-settings: inherit; color: inherit; border: 0; background: none; padding: 0; margin: 0; outline: 0; }
svg { display: block; flex: none; }
.grow { flex: 1; }
.i12 { width: 12px; height: 12px; } .i14 { width: 14px; height: 14px; } .i16 { width: 16px; height: 16px; }
.i18 { width: 18px; height: 18px; } .i20 { width: 20px; height: 20px; }
.tri { flex: none; width: 0; height: 0; border: 5px solid transparent; border-top: 6px solid currentColor; border-bottom: 0; }
.tri.up { border-top: 0; border-bottom: 6px solid currentColor; }
.tri.dark { border-width: 9px 5px 0; color: #5a5a5a; }

.titlebar { display: flex; justify-content: space-between; height: 29px; background: #fff; color: #000; font: 14px/20px "Noto Sans", sans-serif; }
.title { display: flex; align-items: center; gap: 7px; padding-left: 3px; }
.logo { width: 17px; height: 18px; background: linear-gradient(135deg, #111, #444); color: #ddd; padding: 3px; }
.winbtns { display: flex; padding-right: 3px; }
.winbtns button { width: 58px; display: grid; place-items: center; }
.winbtns svg { width: 14px; height: 14px; }
.menubar { display: flex; align-items: center; gap: 14px; height: 25px; padding: 0 7px; background: #fff; border-bottom: 1px solid #eee; color: #000; font: 14px/20px "Noto Sans", sans-serif; }

.maintools { display: flex; align-items: center; height: 38px; padding: 1px 12px 0 10px; position: relative; color: #bdbdbd; gap: 11px; }
.group { display: flex; gap: 1px; border-radius: 4px; overflow: hidden; }
.tb { display: flex; align-items: center; justify-content: center; width: 39px; height: 26px; background: #2e2e2e; color: #a8a8a8; }
.tb.on { background: #505050; color: #d0d0d0; }
.tb.wide { width: 79px; gap: 1px; color: #b8b8b8; }
.tb.dim { background: #202020; }
.maintools > .group:not(.playgroup) { flex: none; }
.playgroup { position: absolute; left: 50%; margin-left: -88px; }
.playgroup .tb { color: #b8b8b8; }
.tb.playing { background: #24476a; }
.tb.device { position: absolute; left: 54%; width: 48px; border-radius: 4px; gap: 5px; }
.right { margin-left: auto; display: flex; align-items: center; gap: 12px; }
.right > .tb { border-radius: 4px; }
.preview { display: flex; align-items: center; justify-content: space-between; height: 28px; width: 216px; padding: 0 8px; border: 1px solid #8a6a10; border-radius: 4px; background: #000; color: #d9a413; }
.preview .tri { border-width: 7px 5px 0; color: #a87c10; }
.dd { position: relative; display: flex; align-items: center; height: 100%; }
.dd select { appearance: none; width: 100%; height: 100%; padding: 0 14px 0 5px; }
.dd::after { content: ""; position: absolute; right: 6px; border: 5px solid transparent; border-top: 6px solid #a0a0a0; border-bottom: 0; pointer-events: none; }
.dd.top { width: 98px; height: 26px; background: #2e2e2e; border-radius: 4px; color: #c0c0c0; }
.dd.top select { padding-left: 7px; }
.dd.top.layout { width: 135px; }

.upper { flex: 1 1 555px; min-height: 0; display: grid; grid-template-columns: 410fr 1014fr 492fr; gap: 2px; }
.panel { display: flex; flex-direction: column; min-width: 0; min-height: 0; background: #2d2d2d; overflow: hidden; }
.tabs { display: flex; align-items: center; height: 24px; flex: none; background: #1f1f1f; padding-right: 10px; }
.tab { display: flex; align-items: center; gap: 5px; height: 24px; padding: 2px 12px 0 9px; background: #313131; }
.hierarchy .tab { width: 120px; }
.sceneview .tab { width: 98px; padding-left: 11px; gap: 6px; }
.game .tab { width: 94px; gap: 3px; }
.keb { margin-left: 8px; }
.bar { display: flex; align-items: center; height: 26px; flex: none; background: #313131; border-top: 1px solid #1c1c1c; border-bottom: 1px solid #1a1a1a; }
.find { display: flex; align-items: center; gap: 6px; height: 20px; flex: 1; min-width: 0; padding-left: 6px; border: 1px solid #151515; border-radius: 5px; background: #232323; }
.find input { flex: 1; min-width: 0; height: 18px; }
.find input::placeholder { color: #686868; opacity: 1; }
.hbar { padding: 0 4px 0 8px; gap: 15px; }
.add { display: flex; align-items: center; gap: 6px; }
.tree { flex: 1; background: linear-gradient(90deg, #262626 40px, #2d2d2d 40px); }
.node { display: flex; align-items: center; height: 20px; }
.node.scene { padding: 0 8px 0 43px; background: #3f3f3f; border-bottom: 1px solid #262626; color: #b8b8b8; gap: 6px; }
.node.scene b { font-weight: 600; }
.node.sun { padding-left: 75px; gap: 4px; }

.shaded { width: 151px; border-right: 1px solid #1c1c1c; margin-right: 6px; }
.seg { position: relative; display: flex; align-items: center; justify-content: center; gap: 4px; height: 100%; min-width: 32px; border-right: 1px solid #1f1f1f; white-space: nowrap; }
.seg.lit { background: #414141; }
.seg.off { color: #6c6c6c; }
.seg.two { width: 34px; font-size: 12px; font-weight: 500; border-left: 1px solid #1c1c1c; margin-right: 6px; }
.w32 { width: 32px; } .w42 { width: 42px; } .w51 { width: 51px; }
.seg.w51 { justify-content: flex-start; padding-left: 6px; gap: 14px; }
.giz { width: 88px; } .seg.giz { gap: 15px; }
.split::after { content: ""; position: absolute; top: 5px; right: 20px; width: 1px; height: 14px; background: #2a2a2a; }
.sbar .find { flex: 0 1 257px; margin: 0 4px 0 9px; }
.sbar .grow { border-right: 1px solid #1c1c1c; height: 100%; }
.viewport { position: relative; flex: 1; min-height: 0; background: #68605b; }
.world { position: absolute; width: 100%; height: 100%; }
.gizmo { position: absolute; top: 8px; right: 12px; width: 90px; }
.axis { font: bold 14px Inter, sans-serif; fill: #fff; }
.persp { display: flex; align-items: center; gap: 3px; color: #c0bdbb; padding: 8px 0 0 6px; }
.vlock { position: absolute; top: 16px; right: 14px; width: 11px; height: 13px; color: #b5b2b0; }

.gbar { gap: 0; overflow: hidden; }
.disp { width: 101px; border-right: 1px solid #1c1c1c; flex: none; }
.aspect { width: 200px; border-right: 1px solid #1c1c1c; flex: none; }
.scale { display: flex; align-items: center; width: 154px; height: 100%; flex: none; padding-left: 8px; gap: 9px; border-right: 1px solid #1c1c1c; }
.scale input { appearance: none; width: 38px; height: 2px; background: #4c4c4c; }
.scale input::-webkit-slider-thumb { appearance: none; width: 13px; height: 13px; border-radius: 50%; background: #848484; }
.maxi { padding-left: 5px; white-space: nowrap; }
.gview { position: relative; flex: 1; min-height: 0; overflow: hidden; background: #282828; box-shadow: inset 0 5px 8px #1a1a1a; }
.bubble { position: absolute; left: 0; right: 0; top: 139px; height: 175px; border-radius: 14px; background: #1e1e1e; }
.black { position: absolute; left: 10%; right: 10%; top: 50px; height: 404px; background: #000; }
.nocam { position: absolute; left: 0; right: 0; top: 189px; text-align: center; font-size: 32px; line-height: 31px; color: #fff; white-space: nowrap; font-family: "Noto Sans", sans-serif; }
.stats { position: absolute; right: 13px; top: 9px; width: 371px; height: 284px; padding: 0 4px; border-radius: 3px; background: rgba(60, 60, 60, .96); box-shadow: 0 2px 8px #000a; color: #cfcfcf; line-height: 18px; }
.stats h2 { margin: 5px 0 0; font-size: 15px; font-weight: 400; line-height: 20px; text-align: center; }
.stats h3 { margin: 2px 0; font-size: 15px; font-weight: 600; line-height: 20px; }
.pair { display: flex; }
.audio { padding: 2px 0 0 9px; }
.audio > :first-child { width: 200px; }
.audio .c2 { line-height: 16px; padding-top: 1px; }
.gfx { margin-top: 13px; }
.gfx h3 { width: 209px; }
.gfx div { line-height: 24px; }
.stats pre { margin: 2px 0 0 9px; font: inherit; }
.stats pre b { font-weight: 600; }

.dock { position: relative; flex: 1 1 383px; display: flex; flex-direction: column; min-height: 0; padding-top: 2px; }
.debugger { flex: 1; min-height: 0; display: flex; flex-direction: column; background: #2d2d2d; }
.tab.active { width: 140px; padding: 1px 0 0 7px; border-top: 2px solid #24476a; }
.tab.plain { background: none; padding-left: 11px; }
.tab.con { padding-left: 21px; }
.dbody { flex: 1; min-height: 0; display: flex; }
.systems { width: 501px; flex: none; display: flex; flex-direction: column; border-right: 1px solid #1f1f1f; }
.dbar { justify-content: space-between; padding-right: 24px; }
.worldsel { width: 122px; border-right: 1px solid #1c1c1c; }
.worldsel::after { right: 5px; }
.find.small { flex: 0 0 125px; }
.thead { display: flex; height: 35px; flex: none; padding-top: 5px; background: #313131; border-bottom: 1px solid #141414; color: #848484; line-height: 34px; }
.thead span { height: 25px; border-right: 1px solid #4c4c4c; }
.h1 { width: 28px; } .h2 { width: 368px; padding-left: 6px; } .h3 { width: 87px; text-align: right; padding-right: 5px; }
.scroller { flex: 1; min-height: 0; display: flex; }
.clip { width: 483px; overflow: hidden; }
table { table-layout: fixed; width: 100%; border-collapse: collapse; margin-top: -15px; }
td { height: 20px; padding: 0; line-height: 20px; overflow: hidden; white-space: nowrap; }
.ck { width: 27px; padding-left: 10px; }
.nm { width: 367px; }
.nm .tri { display: inline-block; margin-right: 7px; }
.ms { text-align: right; padding-right: 7px; }
.grp { color: #666; }
.sel { background: #24476a; }
td input { appearance: none; display: block; width: 17px; height: 17px; border: 1px solid #131313; border-radius: 3px; background: #222; }
td input::before { content: ""; display: block; width: 5px; height: 9px; margin: 1px 0 0 5px; border: solid #d8d8d8; border-width: 0 2px 2px 0; transform: rotate(40deg); }
.sbarv { flex: 1; display: flex; flex-direction: column; align-items: center; padding: 8px 0; background: #292929; }
.sbarv .thumb { width: 13px; height: 82px; margin: 45px 0 auto; border-radius: 7px; background: #484848; }
.entities { flex: 1; min-width: 0; }
.sysname { height: 100%; padding: 0 13px 0 5px; border-right: 1px solid #1c1c1c; }
.chunk { height: 100%; width: 92px; background: #424242; border-left: 1px solid #1c1c1c; color: #8e8e8e; }
.comps { display: flex; align-items: center; gap: 3px; width: 1104px; height: 24px; padding: 0 1px 0 20px; border-bottom: 1px solid #242424; }
.pill { display: flex; align-items: center; gap: 1px; height: 19px; padding: 0 7px 0 1px; border: 1px solid #1f8a30; border-radius: 10px; background: #68a66b; color: #0c190d; }
.pill small { font-size: 8px; font-weight: 800; color: #c5dcc6; }
.count { margin-left: auto; }
.status { display: flex; align-items: center; height: 27px; flex: none; padding: 1px 2px 0 1px; background: #141414; gap: 1px; }
.status .msg { flex: 1; min-width: 0; padding-left: 3px; white-space: nowrap; overflow: hidden; }
.status button { width: 32px; height: 26px; display: grid; place-items: center; border-left: 1px solid #222; }
.desktop { height: 2px; flex: none; background: linear-gradient(90deg, #26343d 60px, #e8e8e8 60px, #e8e8e8 490px, #26343d 490px, #26343d 862px, #777 862px, #777 922px, #26343d 922px); }

.profiler { position: absolute; left: 507px; bottom: 0; width: 1103px; height: 304px; display: flex; flex-direction: column; border: solid #474747; border-width: 1px 1px 0; background: #313131; box-shadow: 0 0 10px #0006; }
.ptabs { height: 26px; padding-right: 7px; gap: 7px; }
.ptabs .tab { width: 103px; height: 24px; margin-top: 2px; padding-left: 7px; gap: 3px; }
.ptabs .i14 { margin-right: 2px; }
.pbar { height: 27px; }
.mods { width: 225px; flex: none; border-right: 1px solid #1c1c1c; }
.mods select { padding-left: 5px; }
.pm { width: 96px; border-right: 1px solid #1c1c1c; }
.pm select { padding-left: 4px; }
.frame { width: 177px; height: 100%; padding: 3px 0 0 5px; border-right: 1px solid #1c1c1c; white-space: nowrap; }
.b1 { width: 54px; } .b2 { width: 108px; } .b3 { width: 102px; } .b4 { width: 115px; } .seg.b4 { gap: 14px; }
.seg.lastb { border: 0; flex: 1; }
.pbody { flex: 1; min-height: 0; display: flex; }
.module { width: 225px; flex: none; background: #353535; border-right: 1px solid #1c1c1c; }
.mhead { display: flex; align-items: center; gap: 8px; height: 32px; padding: 0 0 2px 6px; font-size: 18px; color: #b0b0b0; }
.cpu { width: 18px; font-size: 8px; font-weight: 700; line-height: 8px; }
.cpu svg { width: 18px; height: 11px; }
.lg { display: flex; align-items: center; height: 20px; padding: 0 6px; gap: 6px; }
.sw { width: 9px; height: 9px; border: 1px solid #151515; }
.handle { width: 17px; height: 6px; margin-left: auto; border: solid #505050; border-width: 1px 0; }
.chart { position: relative; flex: 1; min-width: 0; overflow: hidden; background: #2a2a2a; margin-left: 1px; }
.chart svg { width: 100%; height: 100%; }
.tag { position: absolute; left: 5px; padding: 0 4px; border-radius: 4px; background: rgba(0, 0, 0, .74); color: #b4b4b4; }
.t66 { top: -2%; } .t33 { top: 47%; } .t16 { top: 71%; }
.pv { flex: 0 0 19px; padding-left: 2px; background: #1f1f1f; }
.pv .thumb { height: 38px; margin-top: 6px; }
.pfoot { display: flex; align-items: center; height: 26px; flex: none; border-top: 1px solid #121212; }
.live { height: 100%; width: 44px; border-right: 1px solid #1c1c1c; text-align: left; padding-left: 4px; }
.fk { height: 100%; width: 32px; display: grid; place-items: center; border-left: 1px solid #1c1c1c; }
</style>
